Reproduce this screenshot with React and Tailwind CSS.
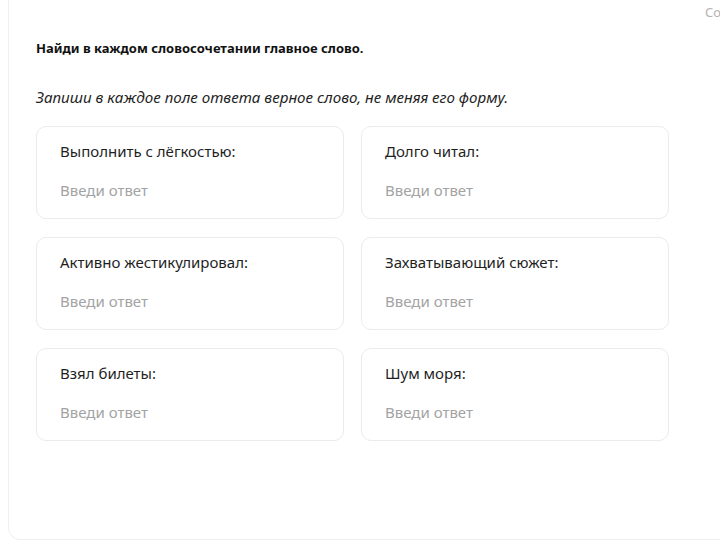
import React from "react";

const pairs = [
  "Выполнить с лёгкостью:",
  "Долго читал:",
  "Активно жестикулировал:",
  "Захватывающий сюжет:",
  "Взял билеты:",
  "Шум моря:",
];

// Одно поле ответа
const AnswerCard = ({ label }) => (
  <div className="flex flex-col gap-[15px] rounded-[10px] border border-[#ebebeb] bg-white px-[23px] pt-3 pb-4">
    <p className="text-[15px] leading-6 text-[#1f1f1f]">{label}</p>
    <input
      type="text"
      placeholder="Введи ответ"
      className="h-6 w-full bg-transparent text-[15px] leading-6 text-[#1f1f1f] outline-none placeholder:text-[#a3a3a3]"
    />
  </div>
);

export default function App() {
  return (
    <div
      className="h-[552px] w-full overflow-hidden bg-white pl-2"
      style={{ fontFamily: '"Noto Sans", "Open Sans", sans-serif' }}
    >
      <div className="-mt-[10px] w-[760px] rounded-xl border border-[#efefef] bg-white pt-[11px] pb-[98px]">
        {/* report link, cut off at the right */}
        <div className="ml-[696px] whitespace-nowrap text-[13px] leading-5 text-[#b3b3b3]">
          Сообщить об ошибке
        </div>

        <div className="pl-[27px]">
          <h2 className="mt-4 text-[13px] font-bold leading-5 text-[#111]">
            Найди в каждом словосочетании главное слово.
          </h2>
          <p className="mt-[27px] text-[15.2px] italic leading-6 text-[#1f1f1f]">
            Запиши в каждое поле ответа верное слово, не меняя его форму.
          </p>

          <div className="mt-[17px] grid w-[633px] grid-cols-2 gap-x-[17px] gap-y-[18px]">
            {pairs.map((label) => (
              <AnswerCard key={label} label={label} />
            ))}
          </div>
        </div>
      </div>
    </div>
  );
}
